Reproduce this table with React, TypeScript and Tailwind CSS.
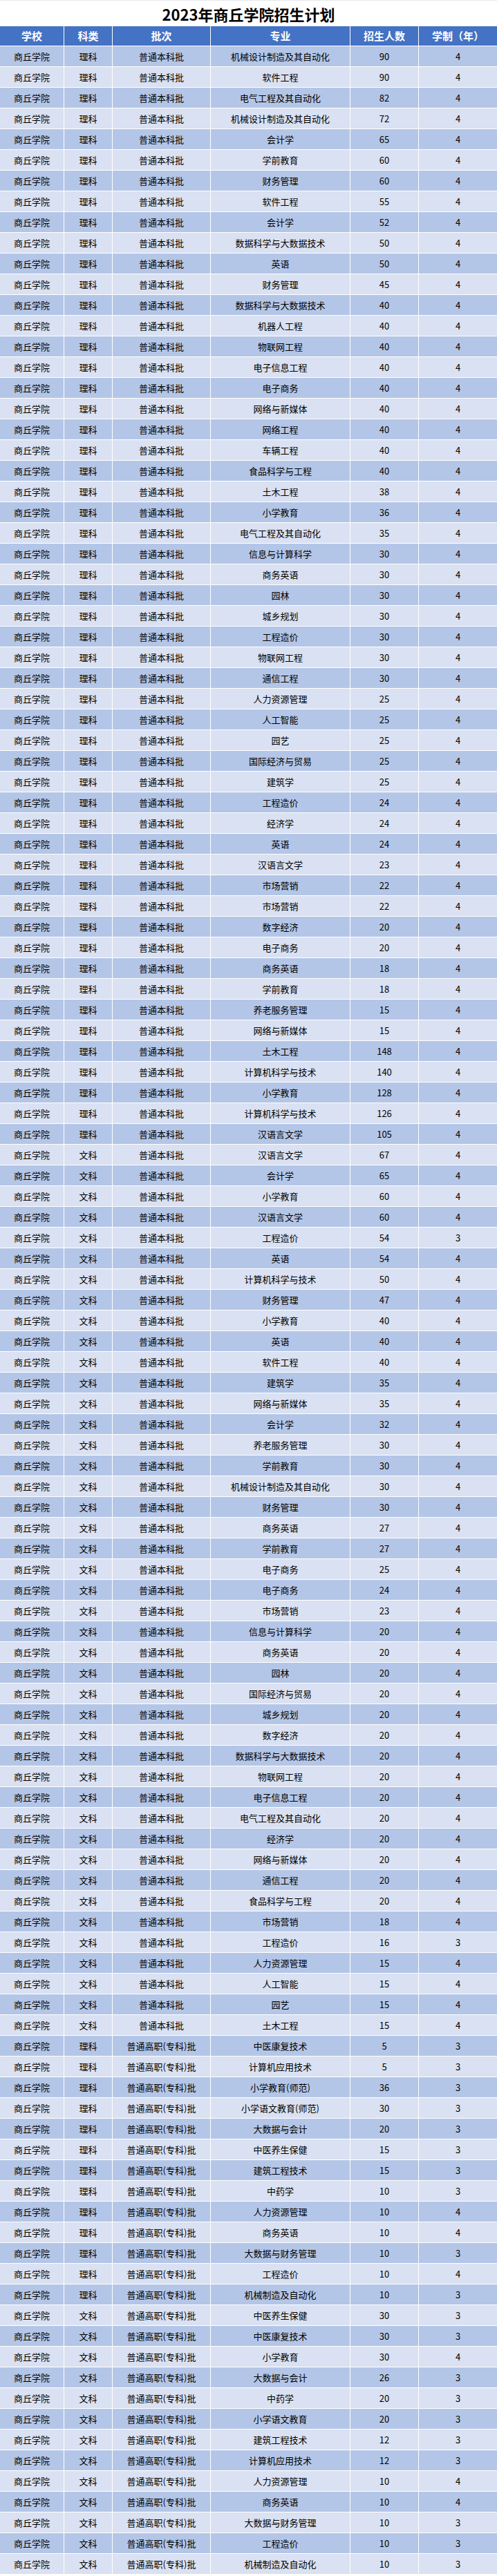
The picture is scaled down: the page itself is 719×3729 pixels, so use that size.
const LK = "理科";
const WK = "文科";
const BK = "普通本科批";
const ZK = "普通高职(专科)批";

type Row = [string, string, string, number, number];

const rows: Row[] = [
  [LK, BK, "机械设计制造及其自动化", 90, 4],
  [LK, BK, "软件工程", 90, 4],
  [LK, BK, "电气工程及其自动化", 82, 4],
  [LK, BK, "机械设计制造及其自动化", 72, 4],
  [LK, BK, "会计学", 65, 4],
  [LK, BK, "学前教育", 60, 4],
  [LK, BK, "财务管理", 60, 4],
  [LK, BK, "软件工程", 55, 4],
  [LK, BK, "会计学", 52, 4],
  [LK, BK, "数据科学与大数据技术", 50, 4],
  [LK, BK, "英语", 50, 4],
  [LK, BK, "财务管理", 45, 4],
  [LK, BK, "数据科学与大数据技术", 40, 4],
  [LK, BK, "机器人工程", 40, 4],
  [LK, BK, "物联网工程", 40, 4],
  [LK, BK, "电子信息工程", 40, 4],
  [LK, BK, "电子商务", 40, 4],
  [LK, BK, "网络与新媒体", 40, 4],
  [LK, BK, "网络工程", 40, 4],
  [LK, BK, "车辆工程", 40, 4],
  [LK, BK, "食品科学与工程", 40, 4],
  [LK, BK, "土木工程", 38, 4],
  [LK, BK, "小学教育", 36, 4],
  [LK, BK, "电气工程及其自动化", 35, 4],
  [LK, BK, "信息与计算科学", 30, 4],
  [LK, BK, "商务英语", 30, 4],
  [LK, BK, "园林", 30, 4],
  [LK, BK, "城乡规划", 30, 4],
  [LK, BK, "工程造价", 30, 4],
  [LK, BK, "物联网工程", 30, 4],
  [LK, BK, "通信工程", 30, 4],
  [LK, BK, "人力资源管理", 25, 4],
  [LK, BK, "人工智能", 25, 4],
  [LK, BK, "园艺", 25, 4],
  [LK, BK, "国际经济与贸易", 25, 4],
  [LK, BK, "建筑学", 25, 4],
  [LK, BK, "工程造价", 24, 4],
  [LK, BK, "经济学", 24, 4],
  [LK, BK, "英语", 24, 4],
  [LK, BK, "汉语言文学", 23, 4],
  [LK, BK, "市场营销", 22, 4],
  [LK, BK, "市场营销", 22, 4],
  [LK, BK, "数字经济", 20, 4],
  [LK, BK, "电子商务", 20, 4],
  [LK, BK, "商务英语", 18, 4],
  [LK, BK, "学前教育", 18, 4],
  [LK, BK, "养老服务管理", 15, 4],
  [LK, BK, "网络与新媒体", 15, 4],
  [LK, BK, "土木工程", 148, 4],
  [LK, BK, "计算机科学与技术", 140, 4],
  [LK, BK, "小学教育", 128, 4],
  [LK, BK, "计算机科学与技术", 126, 4],
  [LK, BK, "汉语言文学", 105, 4],
  [WK, BK, "汉语言文学", 67, 4],
  [WK, BK, "会计学", 65, 4],
  [WK, BK, "小学教育", 60, 4],
  [WK, BK, "汉语言文学", 60, 4],
  [WK, BK, "工程造价", 54, 3],
  [WK, BK, "英语", 54, 4],
  [WK, BK, "计算机科学与技术", 50, 4],
  [WK, BK, "财务管理", 47, 4],
  [WK, BK, "小学教育", 40, 4],
  [WK, BK, "英语", 40, 4],
  [WK, BK, "软件工程", 40, 4],
  [WK, BK, "建筑学", 35, 4],
  [WK, BK, "网络与新媒体", 35, 4],
  [WK, BK, "会计学", 32, 4],
  [WK, BK, "养老服务管理", 30, 4],
  [WK, BK, "学前教育", 30, 4],
  [WK, BK, "机械设计制造及其自动化", 30, 4],
  [WK, BK, "财务管理", 30, 4],
  [WK, BK, "商务英语", 27, 4],
  [WK, BK, "学前教育", 27, 4],
  [WK, BK, "电子商务", 25, 4],
  [WK, BK, "电子商务", 24, 4],
  [WK, BK, "市场营销", 23, 4],
  [WK, BK, "信息与计算科学", 20, 4],
  [WK, BK, "商务英语", 20, 4],
  [WK, BK, "园林", 20, 4],
  [WK, BK, "国际经济与贸易", 20, 4],
  [WK, BK, "城乡规划", 20, 4],
  [WK, BK, "数字经济", 20, 4],
  [WK, BK, "数据科学与大数据技术", 20, 4],
  [WK, BK, "物联网工程", 20, 4],
  [WK, BK, "电子信息工程", 20, 4],
  [WK, BK, "电气工程及其自动化", 20, 4],
  [WK, BK, "经济学", 20, 4],
  [WK, BK, "网络与新媒体", 20, 4],
  [WK, BK, "通信工程", 20, 4],
  [WK, BK, "食品科学与工程", 20, 4],
  [WK, BK, "市场营销", 18, 4],
  [WK, BK, "工程造价", 16, 3],
  [WK, BK, "人力资源管理", 15, 4],
  [WK, BK, "人工智能", 15, 4],
  [WK, BK, "园艺", 15, 4],
  [WK, BK, "土木工程", 15, 4],
  [LK, ZK, "中医康复技术", 5, 3],
  [LK, ZK, "计算机应用技术", 5, 3],
  [LK, ZK, "小学教育(师范)", 36, 3],
  [LK, ZK, "小学语文教育(师范)", 30, 3],
  [LK, ZK, "大数据与会计", 20, 3],
  [LK, ZK, "中医养生保健", 15, 3],
  [LK, ZK, "建筑工程技术", 15, 3],
  [LK, ZK, "中药学", 10, 3],
  [LK, ZK, "人力资源管理", 10, 4],
  [LK, ZK, "商务英语", 10, 4],
  [LK, ZK, "大数据与财务管理", 10, 3],
  [LK, ZK, "工程造价", 10, 4],
  [LK, ZK, "机械制造及自动化", 10, 3],
  [WK, ZK, "中医养生保健", 30, 3],
  [WK, ZK, "中医康复技术", 30, 3],
  [WK, ZK, "小学教育", 30, 4],
  [WK, ZK, "大数据与会计", 26, 3],
  [WK, ZK, "中药学", 20, 3],
  [WK, ZK, "小学语文教育", 20, 3],
  [WK, ZK, "建筑工程技术", 12, 3],
  [WK, ZK, "计算机应用技术", 12, 3],
  [WK, ZK, "人力资源管理", 10, 4],
  [WK, ZK, "商务英语", 10, 4],
  [WK, ZK, "大数据与财务管理", 10, 3],
  [WK, ZK, "工程造价", 10, 3],
  [WK, ZK, "机械制造及自动化", 10, 3],
];

const headers = ["学校", "科类", "批次", "专业", "招生人数", "学制（年）"];

// column grid shared by header and body rows
const cols = "grid grid-cols-[92px_69px_141px_201px_98px_113px] gap-x-px";

export default function App() {
  return (
    <div className="w-[719px] bg-white font-['Noto_Sans_CJK_SC',sans-serif] text-black">
      <div className="flex h-[38px] items-center justify-center border-t border-gray-200 text-[22px] font-bold leading-none">
        2023年商丘学院招生计划
      </div>

      <div className={`${cols} mb-px h-[28px]`}>
        {headers.map((h) => (
          <div
            key={h}
            className="flex items-center justify-center bg-[#4472c4] text-[15px] font-bold text-white"
          >
            {h}
          </div>
        ))}
      </div>

      {rows.map((r, i) => {
        const bg = i % 2 === 0 ? "bg-[#b4c6e7]" : "bg-[#d9e1f2]";
        const cells = ["商丘学院", r[0], r[1], r[2], String(r[3]), String(r[4])];
        return (
          <div key={i} className={`${cols} mb-px h-[29px]`}>
            {cells.map((c, j) => (
              <div
                key={j}
                className={`flex items-center justify-center text-[13px] ${bg}`}
              >
                {c}
              </div>
            ))}
          </div>
        );
      })}
    </div>
  );
}
